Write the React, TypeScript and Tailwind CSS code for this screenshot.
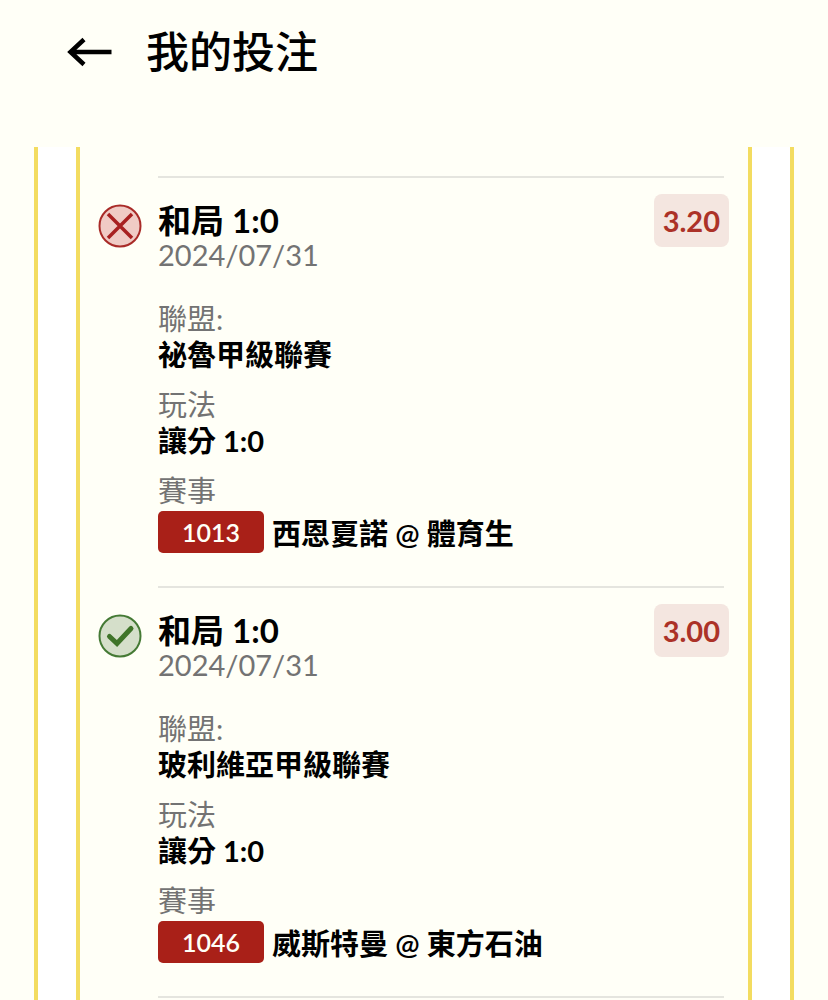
type Bet = {
  id: string;
  pick: string;
  date: string;
  odds: string;
  league: string;
  play: string;
  home: string;
  away: string;
  won: boolean;
};

const BETS: Bet[] = [
  {
    id: "1013",
    pick: "和局 1:0",
    date: "2024/07/31",
    odds: "3.20",
    league: "祕魯甲級聯賽",
    play: "讓分 1:0",
    home: "西恩夏諾",
    away: "體育生",
    won: false,
  },
  {
    id: "1046",
    pick: "和局 1:0",
    date: "2024/07/31",
    odds: "3.00",
    league: "玻利維亞甲級聯賽",
    play: "讓分 1:0",
    home: "威斯特曼",
    away: "東方石油",
    won: true,
  },
];

function ResultIcon({ won }: { won: boolean }) {
  if (won) {
    return (
      <svg viewBox="0 0 44 44" fill="none" className="h-11 w-11" role="img" aria-label="贏">
        <circle cx="22" cy="22" r="20.5" fill="#d5dfca" stroke="#457a35" strokeWidth="2" />
        <path
          d="M11.500 22.500l7.500 7L33 14.500"
          stroke="#3f7429"
          strokeWidth="5"
          strokeLinecap="round"
        />
      </svg>
    );
  }
  return (
    <svg viewBox="0 0 44 44" fill="none" className="h-11 w-11" role="img" aria-label="輸">
      <circle cx="22" cy="22" r="20.5" fill="#f0cbc5" stroke="#a92b28" strokeWidth="2" />
      <path d="M10 10l24 24M34 10l-24 24" stroke="#a82020" strokeWidth="3.5" />
    </svg>
  );
}

function Field({ label, value }: { label: string; value: string }) {
  return (
    <div className="mb-[14px]">
      <dt className="text-[#737373]">{label}</dt>
      <dd className="font-bold">{value}</dd>
    </div>
  );
}

function BetItem({ bet }: { bet: Bet }) {
  return (
    <article className="flex pr-[19px] pl-[18px]">
      <div className="w-[60px] shrink-0 pt-[26px]">
        <ResultIcon won={bet.won} />
      </div>

      <div className="min-w-0 flex-1 pt-4 pb-[33px]">
        <div className="flex items-start justify-between">
          <div className="pt-[7px]">
            <h2 className="text-[33px] leading-[38px] font-bold">{bet.pick}</h2>
            <time className="block text-[29px] leading-8 text-[#737373]">{bet.date}</time>
          </div>
          <span className="rounded-lg bg-[#f4e6e0] px-[9px] text-[29px] leading-[53px] font-bold text-[#ac3228]">
            {bet.odds}
          </span>
        </div>

        <dl className="mt-[30px] text-[29px] leading-9">
          <Field label="聯盟:" value={bet.league} />
          <Field label="玩法" value={bet.play} />
          <dt className="text-[#737373]">賽事</dt>
          <dd className="flex items-end gap-2 pt-0.5 font-semibold">
            <span className="w-[106px] shrink-0 rounded-[5px] bg-[#a92018] text-center text-[25px] leading-[42px] text-[#fffff7]">
              {bet.id}
            </span>
            <span className="leading-[38px]">
              {bet.home} @ {bet.away}
            </span>
          </dd>
        </dl>
      </div>
    </article>
  );
}

function Divider() {
  return <hr className="mr-6 ml-[78px] border-t-2 border-[#e5e5df]" />;
}

export default function App() {
  return (
    <div
      lang="zh-Hant"
      className="flex h-screen flex-col overflow-hidden bg-[#fffff7] font-['Lato','Noto_Sans_CJK_TC',sans-serif] text-black"
    >
      <header className="flex h-[147px] shrink-0 items-start gap-[34px] px-[66px] pt-5">
        <button type="button" aria-label="返回" className="flex h-16 items-center">
          <svg viewBox="0 0 46 32" fill="none" className="h-8 w-[46px]">
            <path d="M18 3.500L4.500 16L18 28.500M4.500 16H45.500" stroke="currentColor" strokeWidth="4.5" />
          </svg>
        </button>
        <h1 className="text-[43px] leading-16 font-medium">我的投注</h1>
      </header>

      {/* bet slip */}
      <main className="mx-[34px] flex min-h-0 flex-1 border-x-4 border-[#f3dc60] bg-white px-[38px]">
        <div className="min-w-0 flex-1 overflow-hidden border-x-4 border-[#f3dc60] bg-[#fffff7] pt-[29px]">
          <Divider />
          {BETS.map((bet) => (
            <div key={bet.id}>
              <BetItem bet={bet} />
              <Divider />
            </div>
          ))}
        </div>
      </main>
    </div>
  );
}
